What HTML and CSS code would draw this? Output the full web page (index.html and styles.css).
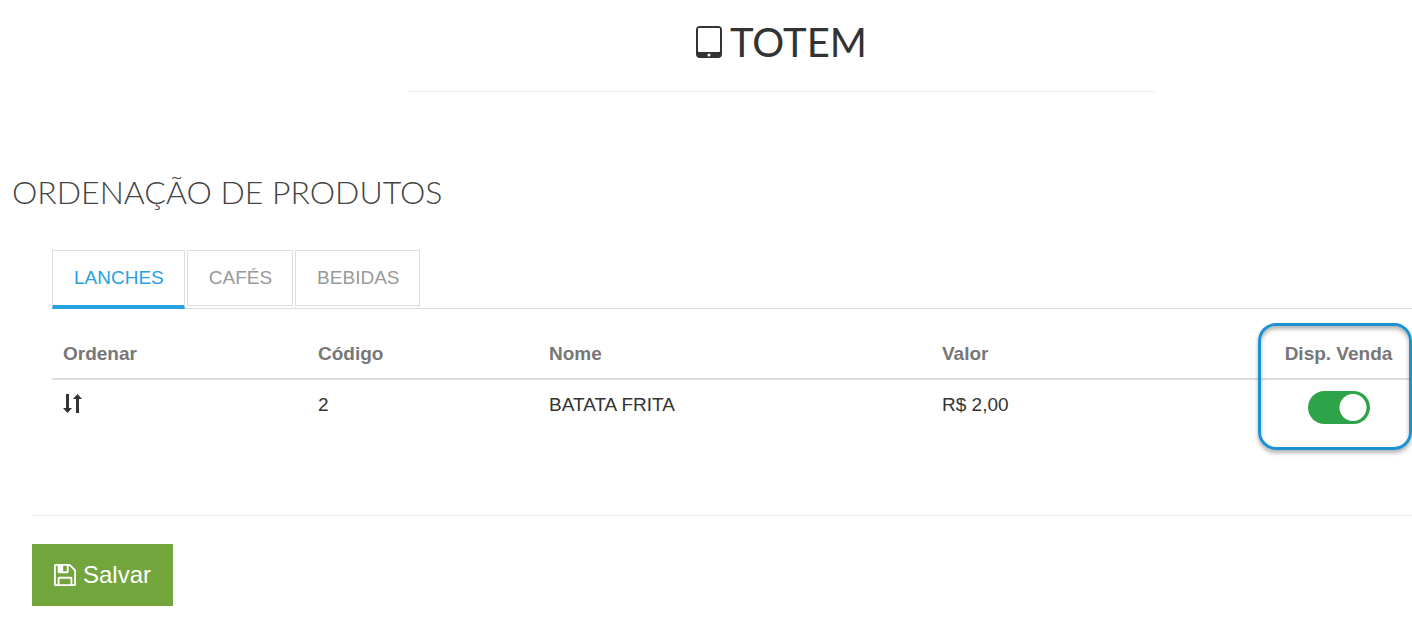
FILE: index.html
```html
<!DOCTYPE html>
<html lang="pt-br">

	<head>
		<meta charset="UTF-8">
		<title>Totem</title>
		<link rel="stylesheet" href="styles.css">
	</head>

	<body>
		<header class="page-header">
			<h1>
				<svg class="icon-tablet" viewBox="0 0 26 32" aria-hidden="true">
					<path fill="currentColor" fill-rule="evenodd" d="M4 0h18a4 4 0 0 1 4 4v24a4 4 0 0 1-4 4H4a4 4 0 0 1-4-4V4a4 4 0 0 1 4-4zM3 2h20a1 1 0 0 1 1 1v22a1 1 0 0 1-1 1H3a1 1 0 0 1-1-1V3a1 1 0 0 1 1-1zM13 27.500a1.500 1.500 0 1 0 0 3a1.500 1.500 0 1 0 0-3z"/>
				</svg>
				TOTEM
			</h1>
		</header>
		<main>
			<h2>ORDENAÇÃO DE PRODUTOS</h2>
			<form class="products">
				<div class="panel">
					<div class="tabs" role="tablist">
						<button type="button" class="tab active" role="tab" aria-selected="true">LANCHES</button>
						<button type="button" class="tab" role="tab" aria-selected="false">CAFÉS</button>
						<button type="button" class="tab" role="tab" aria-selected="false">BEBIDAS</button>
					</div>
					<div class="tab-content">
						<table>
							<thead>
								<tr>
									<th class="col-order">Ordenar</th>
									<th class="col-code">Código</th>
									<th class="col-name">Nome</th>
									<th>Valor</th>
									<th class="col-sale" id="sale">Disp. Venda</th>
								</tr>
							</thead>
							<tbody>
								<tr>
									<td>
										<svg class="icon-sort" viewBox="0 0 19 20" role="img" aria-label="Ordenar">
											<path fill="currentColor" d="M3 0h3v14h3l-4.500 5L0 14h3zM13 19h3V5h3l-4.500-5L10 5h3z"/>
										</svg>
									</td>
									<td>2</td>
									<td>BATATA FRITA</td>
									<td>R$ 2,00</td>
									<td class="col-sale"><input type="checkbox" class="switch" aria-labelledby="sale" checked></td>
								</tr>
							</tbody>
						</table>
						<div class="highlight"></div>
					</div>
				</div>
				<div class="actions">
					<button type="submit" class="save">
						<svg class="icon-save" viewBox="0 0 1536 1536" aria-hidden="true">
							<path fill="currentColor" transform="translate(0 1408) scale(1 -1)" d="M384 0h768v384h-768v-384zM1280 0h128v896q0 14 -10 38.500t-20 34.500l-281 281q-10 10 -34 20t-39 10v-416q0 -40 -28 -68t-68 -28h-576q-40 0 -68 28t-28 68v416h-128v-1280h128v416q0 40 28 68t68 28h832q40 0 68 -28t28 -68v-416zM896 928v320q0 13 -9.500 22.500t-22.500 9.500h-192q-13 0 -22.500 -9.500t-9.500 -22.500v-320q0 -13 9.500 -22.500t22.500 -9.500h192q13 0 22.500 9.500t9.500 22.500zM1536 896v-928q0 -40 -28 -68t-68 -28h-1344q-40 0 -68 28t-28 68v1344q0 40 28 68t68 28h928q40 0 88 -20t96 -68l280 -280q48 -48 68 -88t20 -88z"/>
						</svg>
						Salvar
					</button>
				</div>
			</form>
		</main>
	</body>

</html>
```

FILE: styles.css
```css
* {
	margin: 0;
	padding: 0;
	box-sizing: border-box;
}

body {
	background-color: #fff;
	color: #333;
	font: 19px/26px "Liberation Sans", Arial, sans-serif;
}

.page-header {
	margin: 0 257px 0 408px;
	padding: 16px 0 23px;
	border-bottom: 1px solid #eee;
}

h1 {
	display: flex;
	align-items: center;
	justify-content: center;
	gap: 8px;
	font: 400 40px/52px Lato, sans-serif;
}

.icon-tablet {
	width: 26px;
	height: 32px;
}

h2 {
	padding: 80px 0 0 12px;
	color: #444;
	font: 300 32px/40px Lato, sans-serif;
}

.products {
	padding: 38px 0 18px 32px;
}

.panel {
	padding: 0 0 64px 20px;
}

.tabs {
	display: flex;
	align-items: flex-start;
	gap: 2px;
	height: 59px;
	border-bottom: 1px solid #ddd;
}

.tab {
	height: 56px;
	padding: 0 20px 0 21px;
	border: 1px solid #ddd;
	background-color: #fff;
	color: #999;
	font: inherit;
	cursor: pointer;
}

.tab.active {
	height: 59px;
	border-bottom: 4px solid #29a3df;
	color: #29a0e2;
}

.tab-content {
	position: relative;
}

table {
	width: 100%;
	table-layout: fixed;
	border-collapse: collapse;
}

th {
	padding: 32px 11px 11px;
	border-bottom: 2px solid #ddd;
	color: #777;
	text-align: left;
}

td {
	height: 72px;
	padding: 12px 11px 0;
	vertical-align: top;
}

.col-order {
	width: 255px;
}

.col-code {
	width: 231px;
}

.col-name {
	width: 393px;
}

.col-sale {
	width: 147px;
	text-align: center;
}

.icon-sort {
	display: block;
	width: 19px;
	height: 20px;
	margin-top: 2px;
}

td.col-sale {
	padding-top: 11px;
}

.switch {
	display: block;
	width: 62px;
	height: 33px;
	margin: 0 auto;
	border-radius: 17px;
	background: radial-gradient(circle at 45px 50%, #fff 13px, #2ea44a 14px);
	appearance: none;
	cursor: pointer;
}

/* frame around the sale column */
.highlight {
	position: absolute;
	top: 14px;
	right: 0;
	bottom: 1px;
	width: 154px;
	border: 3px solid #1b93d2;
	border-radius: 18px;
	box-shadow: 0 3px 4px rgba(0, 0, 0, 0.3), inset 0 3px 4px rgba(0, 0, 0, 0.3);
	pointer-events: none;
}

.actions {
	padding-top: 28px;
	border-top: 1px solid #eee;
}

.save {
	display: flex;
	align-items: center;
	gap: 7px;
	height: 62px;
	padding: 0 22px;
	border: 0;
	background-color: #72a53b;
	color: #fff;
	font: 24px "Liberation Sans", Arial, sans-serif;
	cursor: pointer;
}

.icon-save {
	width: 22px;
	height: 22px;
}
```
